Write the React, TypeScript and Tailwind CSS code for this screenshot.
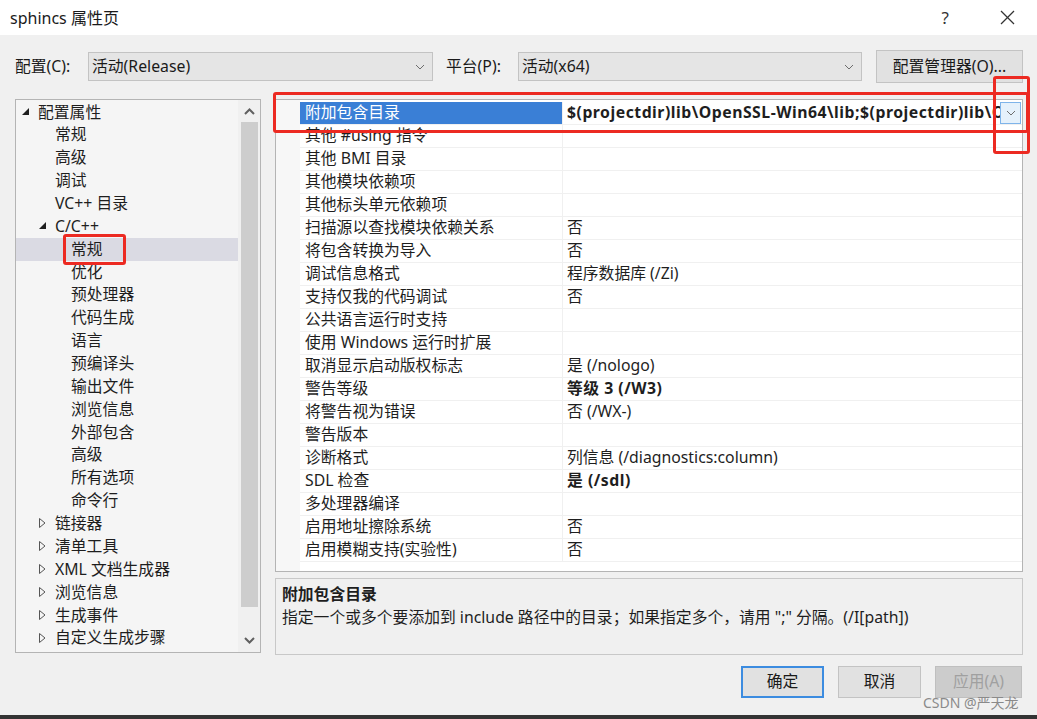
import React from "react";

const FONT = { fontFamily: '"Noto Sans", "Noto Sans CJK SC", sans-serif' };

type TreeItem = { label: string; indent: number; arrow?: "open" | "closed"; selected?: boolean };

const tree: TreeItem[] = [
  { label: "配置属性", indent: 0, arrow: "open" },
  { label: "常规", indent: 1 },
  { label: "高级", indent: 1 },
  { label: "调试", indent: 1 },
  { label: "VC++ 目录", indent: 1 },
  { label: "C/C++", indent: 1, arrow: "open" },
  { label: "常规", indent: 2, selected: true },
  { label: "优化", indent: 2 },
  { label: "预处理器", indent: 2 },
  { label: "代码生成", indent: 2 },
  { label: "语言", indent: 2 },
  { label: "预编译头", indent: 2 },
  { label: "输出文件", indent: 2 },
  { label: "浏览信息", indent: 2 },
  { label: "外部包含", indent: 2 },
  { label: "高级", indent: 2 },
  { label: "所有选项", indent: 2 },
  { label: "命令行", indent: 2 },
  { label: "链接器", indent: 1, arrow: "closed" },
  { label: "清单工具", indent: 1, arrow: "closed" },
  { label: "XML 文档生成器", indent: 1, arrow: "closed" },
  { label: "浏览信息", indent: 1, arrow: "closed" },
  { label: "生成事件", indent: 1, arrow: "closed" },
  { label: "自定义生成步骤", indent: 1, arrow: "closed" },
];

const props: { name: string; value?: string; bold?: boolean }[] = [
  { name: "附加包含目录", value: "$(projectdir)lib\\OpenSSL-Win64\\lib;$(projectdir)lib\\OpenSSL-Win64\\include", bold: true },
  { name: "其他 #using 指令" },
  { name: "其他 BMI 目录" },
  { name: "其他模块依赖项" },
  { name: "其他标头单元依赖项" },
  { name: "扫描源以查找模块依赖关系", value: "否" },
  { name: "将包含转换为导入", value: "否" },
  { name: "调试信息格式", value: "程序数据库 (/Zi)" },
  { name: "支持仅我的代码调试", value: "否" },
  { name: "公共语言运行时支持" },
  { name: "使用 Windows 运行时扩展" },
  { name: "取消显示启动版权标志", value: "是 (/nologo)" },
  { name: "警告等级", value: "等级 3 (/W3)", bold: true },
  { name: "将警告视为错误", value: "否 (/WX-)" },
  { name: "警告版本" },
  { name: "诊断格式", value: "列信息 (/diagnostics:column)" },
  { name: "SDL 检查", value: "是 (/sdl)", bold: true },
  { name: "多处理器编译" },
  { name: "启用地址擦除系统", value: "否" },
  { name: "启用模糊支持(实验性)", value: "否" },
];

function Chevron() {
  return (
    <svg width="10" height="6" viewBox="0 0 10 6">
      <polyline points="1,1 5,5 9,1" fill="none" stroke="#6d6d6d" strokeWidth="1" />
    </svg>
  );
}

function Arrow({ kind }: { kind: "open" | "closed" }) {
  if (kind === "open")
    return (
      <svg width="8" height="8" viewBox="0 0 8 8">
        <polygon points="7,0 7,7 0,7" fill="#1e1e1e" />
      </svg>
    );
  return (
    <svg width="7" height="10" viewBox="0 0 7 10">
      <polygon points="0.5,0.5 6,5 0.5,9.5" fill="none" stroke="#555" strokeWidth="1" />
    </svg>
  );
}

function Select({ text, width }: { text: string; width: string }) {
  return (
    <div className={`${width} h-[29px] bg-[#e5e5e5] border border-[#c3c3c3] flex items-center pl-[3px] pr-[7px]`}>
      <span className="flex-1 text-[15.8px] text-[#1a1a1a]">{text}</span>
      <Chevron />
    </div>
  );
}

function TreePanel() {
  return (
    <div className="w-[246px] h-[554px] shrink-0 border border-[#b4b4b4] bg-[#f5f5f5] flex">
      <div className="flex-1 pt-[1px]">
        {tree.map((t, i) => {
          const textLeft = t.indent === 0 ? 22 : t.indent === 1 ? 39 : 55;
          return (
            <div
              key={i}
              className={`h-[22.86px] flex items-center relative ${t.selected ? "bg-[#dadae3]" : ""}`}
            >
              {t.arrow && (
                <span
                  className={`absolute flex items-center ${t.indent === 0 ? "left-[6px]" : "left-[23px]"} ${
                    t.arrow === "open" ? "top-[7px]" : "top-[6px]"
                  }`}
                >
                  <Arrow kind={t.arrow} />
                </span>
              )}
              <span className="text-[15.8px] text-[#1e1e1e] whitespace-nowrap" style={{ marginLeft: textLeft }}>
                {t.label}
              </span>
            </div>
          );
        })}
      </div>
      <div className="w-[22px] bg-[#f0f0f0] flex flex-col items-center">
        <div className="h-[22px] flex items-center justify-center">
          <svg width="11" height="7" viewBox="0 0 11 7">
            <polyline points="1,6 5.5,1.5 10,6" fill="none" stroke="#606060" strokeWidth="2" />
          </svg>
        </div>
        <div className="w-[17px] h-[485px] bg-[#cdcdcd]" />
        <div className="flex-1" />
        <div className="h-[22px] flex items-center justify-center mb-[1px]">
          <svg width="11" height="7" viewBox="0 0 11 7">
            <polyline points="1,1 5.5,5.5 10,1" fill="none" stroke="#606060" strokeWidth="2" />
          </svg>
        </div>
      </div>
    </div>
  );
}

function PropertyGrid() {
  return (
    <div className="h-[473px] border border-[#b4b4b4] bg-white flex">
      <div className="w-[24px] shrink-0 bg-[#f7f7f7]" />
      <div className="flex-1 min-w-0 pt-[2px]">
        {props.map((p, i) => {
          const sel = i === 0;
          return (
            <div key={i} className="h-[23px] flex border-b border-[#f0f0f0]">
              <div
                className={`w-[263px] shrink-0 flex items-center pl-[5px] border-r border-[#f0f0f0] text-[15.8px] whitespace-nowrap overflow-hidden ${
                  sel ? "bg-[#3a7fd6] text-white" : "text-[#1e1e1e]"
                }`}
              >
                {p.name}
              </div>
              <div className="flex-1 min-w-0 flex items-center">
                <span
                  className={`flex-1 min-w-0 pl-[4px] text-[15.8px] whitespace-nowrap overflow-hidden text-[#1e1e1e] ${
                    p.bold ? "font-bold tracking-[0.5px]" : ""
                  }`}
                >
                  {p.value}
                </span>
                {sel && (
                  <div className="w-[21px] h-[22px] mr-[1px] bg-[#e5f1fb] border border-[#7eb4ea] flex items-center justify-center shrink-0">
                    <Chevron />
                  </div>
                )}
              </div>
            </div>
          );
        })}
      </div>
    </div>
  );
}

export default function App() {
  return (
    <div className="w-[1037px] h-[719px] bg-[#f0f0f0] flex flex-col relative overflow-hidden" style={FONT}>
      <div className="h-[35px] bg-white flex items-center pl-[10px] pr-[22px]">
        <span className="flex-1 text-[16px] text-[#1a1a1a]">sphincs 属性页</span>
        <span className="text-[17px] text-[#333] mr-[51px]">?</span>
        <svg width="15" height="15" viewBox="0 0 15 15">
          <line x1="1" y1="1" x2="14" y2="14" stroke="#333" strokeWidth="1.2" />
          <line x1="14" y1="1" x2="1" y2="14" stroke="#333" strokeWidth="1.2" />
        </svg>
      </div>

      <div className="mt-[15px] h-[33px] flex items-center pl-[15px]">
        <span className="w-[73px] text-[15.8px] text-[#1a1a1a]">配置(C):</span>
        <Select text="活动(Release)" width="w-[345px]" />
        <span className="w-[72px] ml-[13px] text-[15.8px] text-[#1a1a1a]">平台(P):</span>
        <Select text="活动(x64)" width="w-[344px]" />
        <div className="ml-[14px] w-[147px] h-[33px] bg-[#e1e1e1] border border-[#c3c3c3] flex items-center justify-center text-[15.8px] text-[#1a1a1a]">
          配置管理器(O)...
        </div>
      </div>

      <div className="mt-[16px] h-[556px] flex pl-[15px]">
        <TreePanel />
        <div className="ml-[14px] w-[748px] min-w-0 flex flex-col">
          <PropertyGrid />
          <div className="mt-[6px] h-[77px] border border-[#c8c8c8] bg-[#f0f0f0] px-[6px] pt-[3px]">
            <div className="text-[15.8px] font-bold text-[#1e1e1e] leading-[24px]">附加包含目录</div>
            <div className="text-[15.8px] text-[#1e1e1e] leading-[22px]">
              指定一个或多个要添加到 include 路径中的目录；如果指定多个，请用 ";" 分隔。(/I[path])
            </div>
          </div>
        </div>
      </div>

      <div className="mt-[11px] flex justify-end pr-[15px] gap-[14px]">
        <div className="w-[83px] h-[32px] bg-[#e1e1e1] border-2 border-[#3c8ce0] flex items-center justify-center text-[15.8px] text-[#1a1a1a]">
          确定
        </div>
        <div className="w-[83px] h-[32px] bg-[#e1e1e1] border border-[#c3c3c3] flex items-center justify-center text-[15.8px] text-[#1a1a1a]">
          取消
        </div>
        <div className="w-[87px] h-[32px] bg-[#cccccc] border border-[#bfbfbf] flex items-center justify-center text-[15.8px] text-[#a0a0a0]">
          应用(A)
        </div>
      </div>

      <div className="flex-1" />
      <div className="h-[4px] bg-[#333333]" />

      {/* annotation overlays */}
      <div className="absolute left-[273px] top-[92px] w-[756px] h-[41px] border-[3px] border-[#ec2a22] rounded-[3px]" />
      <div className="absolute left-[993px] top-[76px] w-[37px] h-[78px] border-[3px] border-[#ec2a22] rounded-[3px]" />
      <div className="absolute left-[63px] top-[234px] w-[63px] h-[31px] border-[3px] border-[#ec2a22] rounded-[3px]" />
      <div className="absolute left-[923px] top-[692px] text-[14px] text-[#8a8a8a] whitespace-nowrap">CSDN @严天龙</div>
    </div>
  );
}
